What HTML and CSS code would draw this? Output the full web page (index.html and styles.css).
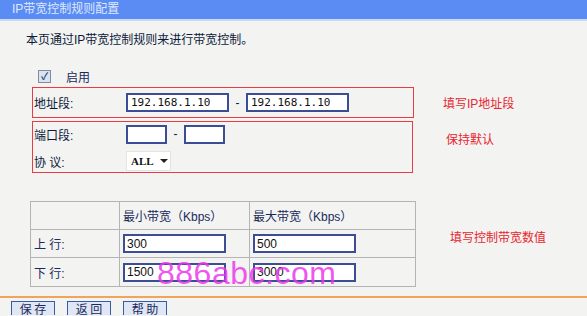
FILE: index.html
```html
<!DOCTYPE html>
<html lang="zh-CN">
<head>
  <meta charset="UTF-8">
  <title>IP带宽控制规则配置</title>
  <link rel="stylesheet" href="styles.css">
</head>
<body>
  <div class="title-bar">IP带宽控制规则配置</div>
  <div class="page">
    <p class="intro">本页通过IP带宽控制规则来进行带宽控制。</p>

    <div class="enable-row">
      <span class="checkbox">&#10003;</span>
      <span class="enable-label">启用</span>
    </div>

    <div class="group">
      <div class="box box-addr">
        <div class="field-row">
          <span class="label">地址段:</span>
          <input class="text ip" type="text" value="192.168.1.10">
          <span class="dash">-</span>
          <input class="text ip" type="text" value="192.168.1.10">
        </div>
      </div>
      <span class="note note-addr">填写IP地址段</span>
    </div>

    <div class="group">
      <div class="box box-port">
        <div class="field-row">
          <span class="label">端口段:</span>
          <input class="text port" type="text">
          <span class="dash">-</span>
          <input class="text port" type="text">
        </div>
        <div class="field-row">
          <span class="label">协&nbsp;议:</span>
          <span class="select">ALL <span class="arrow"></span></span>
        </div>
      </div>
      <span class="note note-port">保持默认</span>
    </div>

    <div class="group group-table">
      <table class="bw-table">
        <tr>
          <td class="c1"></td>
          <td class="c2">最小带宽（Kbps）</td>
          <td class="c3">最大带宽（Kbps）</td>
        </tr>
        <tr>
          <td class="c1">上&nbsp;行:</td>
          <td class="c2"><input class="text bw" type="text" value="300"></td>
          <td class="c3"><input class="text bw" type="text" value="500"></td>
        </tr>
        <tr>
          <td class="c1">下&nbsp;行:</td>
          <td class="c2"><input class="text bw" type="text" value="1500"></td>
          <td class="c3"><input class="text bw" type="text" value="3000"></td>
        </tr>
      </table>
      <span class="note note-bw">填写控制带宽数值</span>
    </div>
  </div>

  <div class="footer">
    <button class="btn">保&nbsp;存</button>
    <button class="btn">返&nbsp;回</button>
    <button class="btn">帮&nbsp;助</button>
  </div>

  <div class="watermark">886abc.com</div>
</body>
</html>
```

FILE: styles.css
```css
body {
  margin: 0;
  background-color: #f3f3f2;
  font-family: "Liberation Sans", "Noto Sans CJK SC", sans-serif;
  font-size: 12px;
  color: #0b1a3a;
  position: relative;
  height: 316px;
  overflow: hidden;
}

.title-bar {
  height: 19px;
  line-height: 18px;
  background-color: #5a8cf4;
  color: #dfe8ff;
  padding-left: 12px;
  font-size: 12px;
  border-bottom: 2px solid #c9d8fb;
}

.page {
  padding-top: 9px;
}

.intro {
  margin: 0 0 0 26px;
  height: 20px;
  line-height: 20px;
  font-size: 12px;
}

.enable-row {
  display: flex;
  align-items: center;
  height: 20px;
  margin-top: 16px;
  padding-left: 38px;
}

.checkbox {
  width: 11px;
  height: 11px;
  border: 1px solid #7a8ea8;
  background-color: #dde3ec;
  color: #2b4b8a;
  font-size: 10px;
  font-weight: bold;
  line-height: 11px;
  text-align: center;
}

.enable-label {
  margin-left: 15px;
  color: #1a2a5a;
}

.group {
  display: flex;
  align-items: center;
  padding-left: 32px;
}

.box {
  border: 1px solid #ea3b45;
  box-sizing: border-box;
}

.box-addr {
  width: 382px;
  height: 31px;
  margin-top: 1px;
  display: flex;
  align-items: center;
}

.box-port {
  width: 381px;
  height: 52px;
  margin-top: 3px;
  display: flex;
  flex-direction: column;
  justify-content: space-between;
  padding: 1px 0 0;
}

.field-row {
  display: flex;
  align-items: center;
  height: 22px;
}

.label {
  width: 92px;
  padding-left: 1px;
}

.dash {
  width: 17px;
  text-align: center;
}

.text {
  box-sizing: border-box;
  height: 19px;
  border: 2px solid #3b4d94;
  background-color: #ffffff;
  font-family: "DejaVu Sans Mono", "Liberation Mono", monospace;
  font-size: 11px;
  padding: 0 3px;
  color: #111;
  margin: 0;
}

.ip {
  width: 103px;
}

.port {
  width: 41px;
}

.select {
  display: flex;
  align-items: center;
  box-sizing: border-box;
  width: 45px;
  height: 20px;
  padding-left: 4px;
  background-color: #ffffff;
  border: 1px solid #e4e4e4;
  font-family: "Liberation Serif", serif;
  font-size: 11px;
  font-weight: bold;
  color: #111;
}

.arrow {
  margin-left: 6px;
  border-left: 4px solid transparent;
  border-right: 4px solid transparent;
  border-top: 4px solid #222;
}

.note {
  color: #e8262e;
  font-size: 12px;
}

.note-addr {
  margin-left: 29px;
}

.note-port {
  margin-left: 33px;
  align-self: flex-start;
  margin-top: 12px;
}

.group-table {
  margin-top: 28px;
  padding-left: 30px;
}

.bw-table {
  border-collapse: collapse;
  border: 1px solid #9a9a9a;
}

.bw-table td {
  border: 1px solid #b4b4b4;
  height: 27px;
  padding: 0 3px;
  color: #1a2a5a;
}

.bw-table tr:last-child td {
  height: 28px;
}

.c1 {
  width: 82px;
}

.c2 {
  width: 123px;
}

.c3 {
  width: 159px;
}

.bw {
  width: 103px;
  font-family: "Liberation Sans", sans-serif;
  font-size: 12px;
  padding: 0 2px;
}

.note-bw {
  margin-left: 34px;
  margin-top: -16px;
}

.footer {
  margin-top: 9px;
  border-top: 2px solid #f2a55a;
  padding: 3px 0 0 11px;
  display: flex;
  gap: 12px;
}

.btn {
  width: 44px;
  height: 14px;
  padding: 0;
  background-color: #dfe6f6;
  border: 1px solid #3b5aa4;
  border-bottom: none;
  color: #1a2a5a;
  font-family: "Noto Sans CJK SC", sans-serif;
  font-size: 12px;
  line-height: 13px;
  overflow: visible;
}

.watermark {
  position: absolute;
  left: 157px;
  top: 255px;
  font-family: "Liberation Sans", sans-serif;
  font-size: 32px;
  color: rgba(236, 56, 236, 0.85);
  letter-spacing: 0.5px;
}
```
